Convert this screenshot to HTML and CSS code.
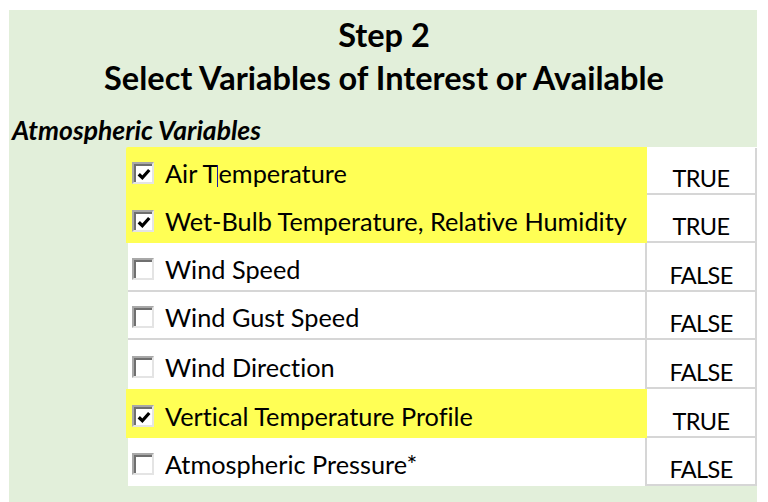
FILE: index.html
```html
<!DOCTYPE html>
<html>
<head>
<meta charset="utf-8">
<link rel="stylesheet" href="styles.css">
</head>
<body>
<div class="panel">
  <div class="title t1">Step 2</div>
  <div class="title t2">Select Variables of Interest or Available</div>
  <div class="section">Atmospheric Variables</div>
  <div class="table">
    <div class="label hl r1"><span class="cb on"><svg viewBox="0 0 12 12"><path d="M1.5 6.2 L4.6 9.2 L10.5 2.6"/></svg></span><span class="txt">Air T<span class="caret"></span>emperature</span></div>
    <div class="val nol r1">TRUE</div>
    <div class="label hl r2"><span class="cb on"><svg viewBox="0 0 12 12"><path d="M1.5 6.2 L4.6 9.2 L10.5 2.6"/></svg></span><span class="txt">Wet-Bulb Temperature, Relative Humidity</span></div>
    <div class="val nol r2">TRUE</div>
    <div class="label line r3"><span class="cb"></span><span class="txt">Wind Speed</span></div>
    <div class="val r3">FALSE</div>
    <div class="label line r4"><span class="cb"></span><span class="txt">Wind Gust Speed</span></div>
    <div class="val r4">FALSE</div>
    <div class="label r5"><span class="cb"></span><span class="txt">Wind Direction</span></div>
    <div class="val r5">FALSE</div>
    <div class="label hl r6"><span class="cb on"><svg viewBox="0 0 12 12"><path d="M1.5 6.2 L4.6 9.2 L10.5 2.6"/></svg></span><span class="txt">Vertical Temperature Profile</span></div>
    <div class="val nol r6">TRUE</div>
    <div class="label r7"><span class="cb"></span><span class="txt">Atmospheric Pressure*</span></div>
    <div class="val last r7">FALSE</div>
  </div>
</div>
</body>
</html>
```
FILE: styles.css
```css
html, body {
  margin: 0;
  padding: 0;
  background: #ffffff;
}
body {
  font-family: Lato, "Open Sans", sans-serif;
  font-variant-ligatures: none;
  color: #000;
}
.panel {
  margin: 10px 0 0 9px;
  width: 748px;
  height: 492px;
  background: #e2efda;
  overflow: hidden;
}
.title {
  font-weight: bold;
  font-size: 32.5px;
  line-height: 39px;
  text-align: center;
  padding-left: 2px;
}
.t1 {
  padding-top: 5px;
}
.t2 {
  margin-top: 4px;
}
.section {
  margin-top: 17px;
  font-weight: bold;
  font-style: italic;
  font-size: 26.5px;
  line-height: 32px;
  padding-left: 3px;
}
.table {
  margin: 1px 0 0 119px;
  width: 629px;
  display: grid;
  grid-template-columns: 517px 112px;
  grid-template-rows: 48px 48px 49px 48px 49px 49px 48px;
  background: #fff;
}
.label {
  display: flex;
  align-items: center;
  padding: 4px 0 0 4px;
  font-size: 25.3px;
  box-sizing: border-box;
}
.label.hl {
  background: #ffff55;
  box-shadow: -2px 0 0 #ffff55, 2px 0 0 #ffff55;
  position: relative;
  z-index: 1;
}
.label.r1 {
  border-radius: 2px 0 0 0;
}
.label.line {
  border-bottom: 2px solid #d6d6d6;
}
.val {
  box-sizing: border-box;
  border-left: 2px solid #d6d6d6;
  border-right: 2px solid #d6d6d6;
  border-bottom: 2px solid #d6d6d6;
  display: flex;
  align-items: flex-end;
  justify-content: center;
  font-size: 23.5px;
  letter-spacing: -0.6px;
  line-height: 1;
  padding-bottom: 3px;
}
.val.r1 {
  margin-top: 1px;
}
.val.nol {
  border-left-color: #fff;
}
.cb {
  width: 22px;
  height: 22px;
  box-sizing: border-box;
  background: #fff;
  border-top: 2px solid #a8a8a8;
  border-left: 2px solid #a8a8a8;
  border-bottom: 2px solid #e4e4e4;
  border-right: 2px solid #e4e4e4;
  box-shadow: inset 2px 2px 0 #6f6f6f;
  margin-right: 11px;
  flex: none;
  display: flex;
  align-items: center;
  justify-content: center;
}
.cb svg {
  width: 14px;
  height: 14px;
  margin: 2px 0 0 2px;
}
.cb path {
  fill: none;
  stroke: #000;
  stroke-width: 2.8;
}
.txt {
  white-space: nowrap;
}
.caret {
  display: inline-block;
  width: 0;
  height: 22px;
  border-left: 1.5px solid #1a1aa8;
  vertical-align: -4px;
}
```
